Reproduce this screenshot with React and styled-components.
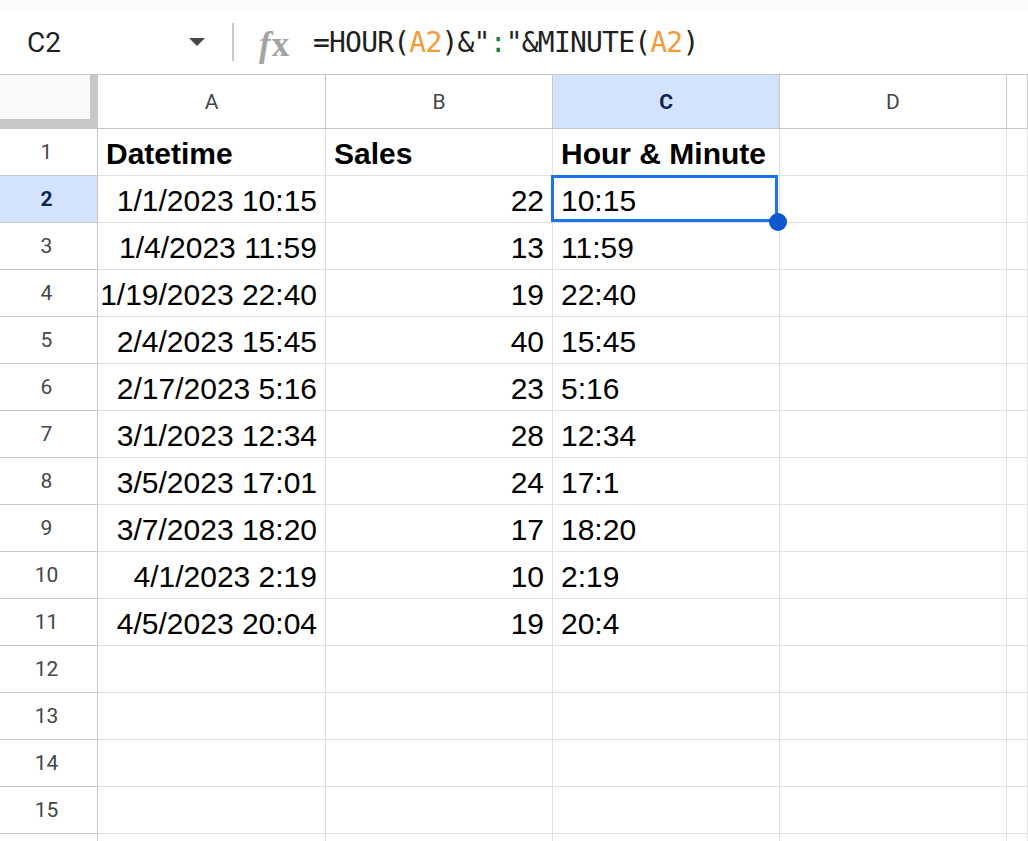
import React from 'react';
import styled, { createGlobalStyle } from 'styled-components';

const Global = createGlobalStyle`
  html, body { margin: 0; padding: 0; background: #fff; overflow: hidden; }
  #root { width: 1028px; height: 841px; }
`;

const Page = styled.div`
  width: 1028px;
  height: 841px;
  overflow: hidden;
  display: flex;
  flex-direction: column;
  background: #fff;
`;

const TopStrip = styled.div`
  flex: none;
  height: 10px;
  background: #f9fbfd;
`;

const FormulaBar = styled.div`
  flex: none;
  height: 65px;
  box-sizing: border-box;
  border-bottom: 1px solid #c4c7c5;
  display: flex;
  align-items: center;
  background: #fff;
`;

const NameBox = styled.div`
  width: 232px;
  box-sizing: border-box;
  padding-left: 27px;
  padding-right: 27px;
  display: flex;
  align-items: center;
  justify-content: space-between;
  font-family: Roboto, "Liberation Sans", sans-serif;
  font-size: 28px;
  color: #1f1f1f;
`;

const Caret = styled.span`
  width: 0;
  height: 0;
  border-left: 8px solid transparent;
  border-right: 8px solid transparent;
  border-top: 8px solid #444746;
`;

const Divider = styled.div`
  width: 2px;
  height: 38px;
  background: #c7c7c7;
`;

const FxIcon = styled.span`
  margin-left: 25px;
  width: 34px;
  padding-top: 4px;
  font-family: "Liberation Serif", serif;
  font-weight: bold;
  font-size: 35px;
  color: #a3a3a3;
  display: flex;
  align-items: baseline;
  line-height: 1;
  i { font-style: italic; margin-right: 1px; }
`;

const Formula = styled.div`
  margin-left: 20px;
  font-family: "DejaVu Sans Mono", "Liberation Mono", monospace;
  font-size: 28px;
  letter-spacing: -0.8px;
  color: #1f1f1f;
  white-space: nowrap;
`;

const Tok = styled.span`
  color: ${p => p.$c || 'inherit'};
`;

const Grid = styled.div`
  display: grid;
  grid-template-columns: 98px 228px 227px 227px 227px 1fr;
  grid-template-rows: 54px;
  grid-auto-rows: 47px;
`;

const Corner = styled.div`
  box-sizing: border-box;
  background: #f8f9fa;
  border-right: 8px solid #c7c7c7;
  border-bottom: 10px solid #c7c7c7;
`;

const ColHead = styled.div`
  box-sizing: border-box;
  border-right: 1px solid #c7c7c7;
  border-bottom: 1px solid #c7c7c7;
  display: flex;
  align-items: center;
  justify-content: center;
  font-family: Roboto, "Liberation Sans", sans-serif;
  font-size: 21px;
  background: ${p => (p.$sel ? '#d3e3fd' : '#fff')};
  color: ${p => (p.$sel ? '#0b2550' : '#444746')};
  font-weight: ${p => (p.$sel ? 700 : 400)};
`;

const RowHead = styled.div`
  box-sizing: border-box;
  border-right: 1px solid #c7c7c7;
  border-bottom: 1px solid #c7c7c7;
  padding-right: 4px;
  display: flex;
  align-items: center;
  justify-content: center;
  font-family: Roboto, "Liberation Sans", sans-serif;
  font-size: 21px;
  background: ${p => (p.$sel ? '#d3e3fd' : '#fff')};
  color: ${p => (p.$sel ? '#0b2550' : '#444746')};
  font-weight: ${p => (p.$sel ? 700 : 400)};
`;

const Cell = styled.div`
  position: relative;
  box-sizing: border-box;
  border-right: 1px solid #e1e1e1;
  border-bottom: 1px solid #e1e1e1;
  padding: 4px 8px 0;
  display: flex;
  align-items: center;
  justify-content: ${p => (p.$right ? 'flex-end' : 'flex-start')};
  font-family: "Liberation Sans", Arial, sans-serif;
  font-size: 30px;
  font-weight: ${p => (p.$bold ? 700 : 400)};
  color: #000;
  white-space: nowrap;
  z-index: ${p => (p.$sel ? 2 : 0)};
`;

const Selection = styled.div`
  position: absolute;
  left: -2px;
  top: -1px;
  right: 1px;
  bottom: 0;
  border: 3px solid #1a73e8;
  pointer-events: none;
`;

const Handle = styled.div`
  position: absolute;
  width: 18px;
  height: 18px;
  border-radius: 50%;
  background: #0b57d0;
  right: -8px;
  bottom: -9px;
`;

const data = [
  ['Datetime', 'Sales', 'Hour & Minute'],
  ['1/1/2023 10:15', '22', '10:15'],
  ['1/4/2023 11:59', '13', '11:59'],
  ['1/19/2023 22:40', '19', '22:40'],
  ['2/4/2023 15:45', '40', '15:45'],
  ['2/17/2023 5:16', '23', '5:16'],
  ['3/1/2023 12:34', '28', '12:34'],
  ['3/5/2023 17:01', '24', '17:1'],
  ['3/7/2023 18:20', '17', '18:20'],
  ['4/1/2023 2:19', '10', '2:19'],
  ['4/5/2023 20:04', '19', '20:4'],
];

const cols = ['A', 'B', 'C', 'D', ''];

export default function App() {
  const rows = [];
  for (let r = 1; r <= 16; r++) {
    const d = data[r - 1];
    const header = r === 1;
    const sel = r === 2;
    rows.push(
      <React.Fragment key={r}>
        <RowHead $sel={sel}>{r <= 15 ? r : ''}</RowHead>
        <Cell $bold={header} $right={!header && !!d}>{d ? d[0] : ''}</Cell>
        <Cell $bold={header} $right={!header && !!d}>{d ? d[1] : ''}</Cell>
        <Cell $bold={header} $sel={sel}>
          {d ? d[2] : ''}
          {sel && (
            <>
              <Selection />
              <Handle />
            </>
          )}
        </Cell>
        <Cell />
        <Cell />
      </React.Fragment>
    );
  }
  return (
    <Page>
      <Global />
      <TopStrip />
      <FormulaBar>
        <NameBox>
          <span>C2</span>
          <Caret />
        </NameBox>
        <Divider />
        <FxIcon>
          <i>f</i>x
        </FxIcon>
        <Formula>
          =HOUR(<Tok $c="#f29b38">A2</Tok>)&amp;"<Tok $c="#188038">:</Tok>"&amp;MINUTE(<Tok $c="#f29b38">A2</Tok>)
        </Formula>
      </FormulaBar>
      <Grid>
        <Corner />
        {cols.map((c, i) => (
          <ColHead key={i} $sel={c === 'C'}>{c}</ColHead>
        ))}
        {rows}
      </Grid>
    </Page>
  );
}
